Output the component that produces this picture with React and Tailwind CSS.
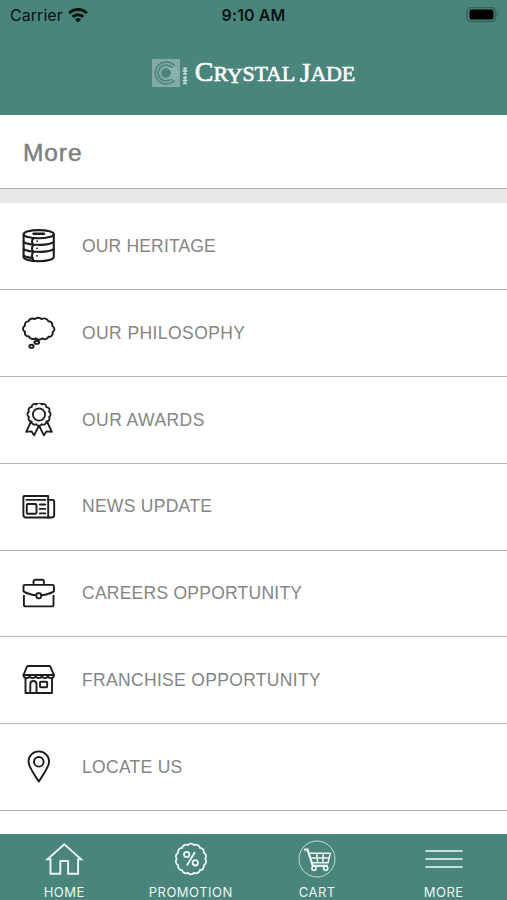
import { clsx } from "clsx";

// Closed outline made of small outward bumps around a centre
function scallop(cx, cy, rx, ry, count, bump) {
  const pts = Array.from({ length: count }, (_, i) => {
    const a = (i / count) * Math.PI * 2 - Math.PI / 2 + Math.PI / count;
    return `${(cx + rx * Math.cos(a)).toFixed(2)} ${(cy + ry * Math.sin(a)).toFixed(2)}`;
  });
  return `M${pts[0]}` + [...pts.slice(1), pts[0]].map((p) => `A${bump} ${bump} 0 0 1 ${p}`).join("") + "Z";
}

function RowIcon({ children, width = 1.8 }) {
  return (
    <svg
      viewBox="0 0 34 34"
      className="w-[34px] h-[34px] flex-shrink-0 text-[#1c1c1c]"
      fill="none"
      stroke="currentColor"
      strokeWidth={width}
      strokeLinecap="round"
      strokeLinejoin="round"
    >
      {children}
    </svg>
  );
}

const HeritageIcon = () => (
  <RowIcon width={2.1}>
    <ellipse cx="16.7" cy="5.2" rx="15.1" ry="4.1" />
    <path d="M11.5 4.8H22" strokeWidth="2.4" />
    <path d="M1.6 5.5V28c0 2.400 6.500 4.200 15.100 4.200s15.100-1.800 15.100-4.200V5.500" />
    <path d="M1.700 13.200c2 1.500 5 2 8.800 2.300M1.700 20.200c2 1.500 5 2 8.800 2.300M1.700 26.600c2 1.500 5 2 8.800 2.300" />
    <path d="M11.500 9.400c-2 1.500-2 4.600 0 6.100 9 .8 17-.1 20.300-2.300M11.500 16c-2 1.500-2 5 0 6.500 9 .8 17-.1 20.300-2.300M11.500 23c-2 1.500-2 5.500 0 8.500" />
    <path d="M15 12.200h.1M15 19.300h.1M15 26.800h.1" strokeWidth="1.700" />
  </RowIcon>
);

const PhilosophyIcon = () => (
  <RowIcon width={1.9}>
    <path d="M6.400 5.400C7.200 2.800 10.600 1.700 12.800 3.200c1.700-2 5.200-2 6.800-.1 2.400-1.500 5.800-.4 6.700 2.200 2.900-.1 4.600 2.300 3.900 4.700 2.900 1.500 2.900 4.800.3 6.100.8 2.800-1.200 4.900-4.100 4.700-1 2.400-4.100 3.100-6.300 1.500-1.800 1.900-5 1.900-6.600-.1-2.300 1.500-5.500.7-6.500-1.800-2.900.2-4.700-1.900-3.900-4.500C.2 14.500.3 11 3 9.800 2.300 7.500 3.900 5.300 6.400 5.400Z" />
    <ellipse cx="14.800" cy="26.300" rx="2.400" ry="1.600" />
    <ellipse cx="9.500" cy="30.300" rx="2.200" ry="1.600" />
  </RowIcon>
);

const AwardIcon = () => (
  <RowIcon width={1.8}>
    <path d={scallop(17, 11.3, 10.4, 10.2, 12, 3)} />
    <circle cx="17" cy="11.500" r="6.100" />
    <path d="M8.500 19.500 4.200 28.800l5.200-.5 2.700 4L17 22.500l4.900 9.800 2.700-4 5.200.5L25.500 19.500" />
  </RowIcon>
);

const NewsIcon = () => (
  <RowIcon width={1.9}>
    <path d="M2.300 6h23.900v21.500H4c-1.600 0-2.600-1-2.600-2.500V7c0-.6.300-1 .9-1Z" />
    <path d="M26.200 9.900h4.500c.9 0 1.500.5 1.500 1.300V25c0 1.600-1 2.500-2.600 2.500h-3.400" />
    <path d="M4.500 9.900h18.800M17.800 14.500h5.500M17.800 18.900h5.500M17.800 23.400h5.500" />
    <rect x="4.800" y="14" width="9.700" height="9.700" rx="1" />
  </RowIcon>
);

const CareersIcon = () => (
  <RowIcon width={1.9}>
    <path d="M11.500 6.300V4.600c0-1 .7-1.800 1.700-1.800h7c1 0 1.700.8 1.700 1.800v1.700" />
    <path d="M14 18.300C8.500 17.600 4.500 16.300 1.500 14.400V9.300c0-.8.600-1.400 1.400-1.400h27.600c.8 0 1.400.6 1.400 1.400v5.100c-3 1.900-7 3.200-12.500 3.900" />
    <path d="M1.900 18.700v9c0 1 .6 1.700 1.500 1.700h26.600c.9 0 1.500-.7 1.500-1.700v-9" />
    <rect x="14.400" y="16.300" width="4.700" height="5" rx="1.500" />
  </RowIcon>
);

const FranchiseIcon = () => (
  <RowIcon width={1.9}>
    <path d="M6.500 3h20.400c.8 0 1.300.3 1.700 1l3.300 8H1.500L4.800 4c.4-.7.900-1 1.700-1Z" />
    <path d="M1.500 12c0 4.200 6.100 4.200 6.100 0 0 4.200 6.100 4.200 6.100 0 0 4.200 6.100 4.200 6.100 0 0 4.200 6.100 4.200 6.100 0 0 4.200 6 4.200 6 0" />
    <path d="M3.500 15.500v14.500h26.500V15.500" />
    <path d="M8.300 29.800v-8.500c0-4.400 6.200-4.400 6.200 0v8.500" />
    <rect x="18" y="18.700" width="7.200" height="5.600" rx="1" />
  </RowIcon>
);

const LocateIcon = () => (
  <RowIcon width={1.9}>
    <path d="M16.800 31.500C13 25.500 6.500 17 6.500 11.600a10.300 10.200 0 0 1 20.600 0C27.100 17 20.600 25.500 16.800 31.500Z" />
    <circle cx="16.800" cy="11.800" r="4.800" />
  </RowIcon>
);

const menuItems = [
  { label: "OUR HERITAGE", icon: HeritageIcon, spacing: "tracking-[0.17px]" },
  { label: "OUR PHILOSOPHY", icon: PhilosophyIcon, spacing: "tracking-[0.42px]" },
  { label: "OUR AWARDS", icon: AwardIcon, spacing: "tracking-[0.45px]" },
  { label: "NEWS UPDATE", icon: NewsIcon, spacing: "tracking-[0.28px]" },
  { label: "CAREERS OPPORTUNITY", icon: CareersIcon, spacing: "tracking-[0.25px]" },
  { label: "FRANCHISE OPPORTUNITY", icon: FranchiseIcon, spacing: "tracking-[0.33px]" },
  { label: "LOCATE US", icon: LocateIcon, spacing: "tracking-[0.3px]" },
];

function TabIcon({ children, width = 1.8 }) {
  return (
    <svg viewBox="0 0 40 40" className="w-10 h-10" fill="none" stroke="currentColor" strokeWidth={width}>
      {children}
    </svg>
  );
}

const HomeIcon = () => (
  <TabIcon width={1.9}>
    <path d="M6.500 20.200v14.600h9.800V22h7.800v12.800h10V20.200h3L20.300 5.200 3.500 20.200Z" />
  </TabIcon>
);

const PromotionIcon = () => (
  <TabIcon>
    <path d={scallop(20, 20, 14.3, 14.3, 14, 4.2)} />
    <circle cx="15.700" cy="15.500" r="2.700" />
    <circle cx="24.300" cy="23.800" r="2.700" />
    <path d="M24 13 15.900 26.500" />
  </TabIcon>
);

const CartIcon = () => (
  <TabIcon width={1.6}>
    <circle cx="20" cy="20" r="18" strokeWidth="1" opacity="0.75" />
    <path d="M7 10.700h3.500l5.300 16.200H31" strokeWidth="2.200" />
    <path d="M12.800 14.200h20.500l-2.300 9.500H15.500M13.800 19h18.500M19.700 14.500l.9 9M26.400 14.500l-.6 9" strokeWidth="1.500" />
    <circle cx="17" cy="29.300" r="2.100" />
    <circle cx="28.700" cy="29.300" r="2.100" />
  </TabIcon>
);

const MoreIcon = () => (
  <TabIcon>
    <path d="M1.500 12h37M1.500 20h37M1.500 28h37" opacity="0.800" />
  </TabIcon>
);

const tabs = [
  { label: "HOME", icon: HomeIcon },
  { label: "PROMOTION", icon: PromotionIcon },
  { label: "CART", icon: CartIcon },
  { label: "MORE", icon: MoreIcon },
];

function StatusBar() {
  return (
    <div className="h-[30px] grid grid-cols-3 items-center px-2 font-['Inter','Liberation_Sans',sans-serif] text-[#071412]">
      <div className="flex items-center gap-[5px] pl-[2px]">
        <span className="text-base tracking-[0.05px]">Carrier</span>
        <svg viewBox="0 0 20 16" className="w-5 h-4" fill="none" stroke="currentColor" strokeWidth="3">
          <path d="M1.200 6.200a12.600 12.600 0 0 1 17.600 0M4.600 9.900a7.800 7.800 0 0 1 10.800 0" />
          <path d="M10 15.500 6.900 12.400a4.500 4.500 0 0 1 6.200 0Z" fill="currentColor" stroke="none" />
        </svg>
      </div>
      <span className="text-center text-base font-semibold tracking-[0.1px] whitespace-nowrap">9:10 AM</span>
      <svg viewBox="0 0 34 16" className="w-[34px] h-4 justify-self-end">
        <rect x="2" y="0.500" width="28.500" height="14" rx="4" fill="none" stroke="#306359" strokeWidth="1.500" />
        <rect x="4.500" y="2.600" width="24" height="10" rx="2" fill="#000" />
        <path d="M32.200 5.500v4c1.500-.6 1.500-3.400 0-4Z" fill="#306359" />
      </svg>
    </div>
  );
}

function Logo() {
  return (
    <div className="flex items-center">
      <svg viewBox="0 0 37 28" className="w-[37px] h-7">
        <rect width="28" height="28" fill="#80aaa3" />
        <g fill="none" stroke="#4a857c">
          <path d="M22.500 6.700a11 11 0 1 0 0 14.600" strokeWidth="1.500" />
          <path d="M20.300 9a8 8 0 1 0 0 10" strokeWidth="1.700" />
          <circle cx="14" cy="14" r="4.300" fill="#4a857c" strokeWidth="1" />
        </g>
        <path d="M17 10h8M19 13h8M19 16h8M17 19h7" stroke="#a5c5be" strokeWidth="1" />
        <path d="M31 9.500h4M30.500 12h5M33 8v7M31 15h4M31 18.500h4M33 17v8M30.500 21.500h5M31 24.500h4" stroke="#c8dfd9" strokeWidth="1.300" fill="none" />
      </svg>
      <span className="ml-[6px] font-['Liberation_Serif',serif] text-[22px] leading-7 tracking-[-0.15px] text-white whitespace-nowrap [-webkit-text-stroke:0.6px_white]">
        <span className="text-[28px]">C</span>R<span className="relative top-[2px]">Y</span>STAL{" "}
        <span className="relative top-px text-[28px]">J</span>ADE
      </span>
    </div>
  );
}

export default function App() {
  return (
    <div className="w-full h-screen flex flex-col overflow-hidden bg-white font-['Liberation_Sans',sans-serif]">
      <header className="h-[115px] flex-shrink-0 bg-[#4a857c]">
        <StatusBar />
        <div className="h-[86px] flex items-center justify-center">
          <Logo />
        </div>
      </header>

      <div className="h-[74px] flex-shrink-0 flex items-center px-[23px] pt-1 border-b border-[#aaa]">
        <h1 className="text-[24.5px] tracking-[0.9px] text-[#808080] [-webkit-text-stroke:0.5px_#808080]">More</h1>
      </div>
      <div className="h-[14px] flex-shrink-0 bg-[#e8e8e8]" />

      <main className="flex-1 min-h-0">
        {menuItems.map(({ label, icon: Icon, spacing }) => (
          <div key={label} className="h-[86.9px] flex items-center gap-[26px] pl-[22px] border-b border-[#b5b5b5]">
            <Icon />
            <span className={clsx("text-[17.5px] text-[#858585]", spacing)}>{label}</span>
          </div>
        ))}
      </main>

      {/* Bottom tabs */}
      <nav className="h-[66px] flex-shrink-0 grid grid-cols-4 pl-px bg-[#4a857c] text-[#eaf6f3]">
        {tabs.map(({ label, icon: Icon }) => (
          <div key={label} className="flex flex-col items-center pt-[5px]">
            <Icon />
            <span className="mt-[4px] font-['Inter','Liberation_Sans',sans-serif] text-[13px] leading-[18px] tracking-[0.5px]">{label}</span>
          </div>
        ))}
      </nav>
    </div>
  );
}
